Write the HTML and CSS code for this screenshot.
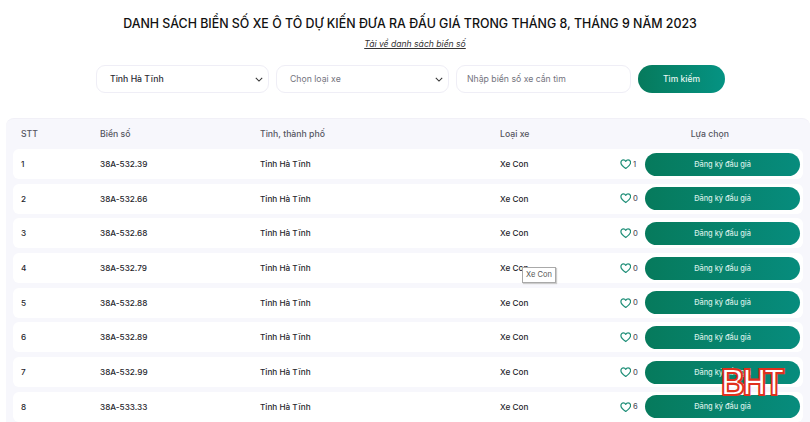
FILE: index.html
```html
<!DOCTYPE html>
<html lang="vi">
<head>
<meta charset="utf-8">
<title>Danh sách biển số</title>
<link rel="stylesheet" href="styles.css">
</head>
<body>
<svg class="defs" width="0" height="0"><symbol id="heart" viewBox="0 0 14 13"><path d="M7 11.8C3.6 9.3 1 7.3 1 4.5 1 2.6 2.4 1.2 4.1 1.2 5.3 1.2 6.4 1.8 7 2.9 7.6 1.8 8.7 1.2 9.9 1.2 11.6 1.2 13 2.6 13 4.5 13 7.3 10.4 9.3 7 11.8Z" fill="none" stroke="currentColor" stroke-width="1.5" stroke-linejoin="round"/></symbol></svg>
<main class="page">
  <h1 class="title">DANH SÁCH BIỂN SỐ XE Ô TÔ DỰ KIẾN ĐƯA RA ĐẤU GIÁ TRONG THÁNG 8, THÁNG 9 NĂM 2023</h1>
  <a class="download">Tải về danh sách biển số</a>
  <form class="filters">
    <div class="field select dark"><span>Tỉnh Hà Tĩnh</span><svg class="chev" viewBox="0 0 10 6"><path d="M1 1l4 4 4-4" fill="none" stroke="currentColor" stroke-width="1.3"/></svg></div>
    <div class="field select"><span>Chọn loại xe</span><svg class="chev" viewBox="0 0 10 6"><path d="M1 1l4 4 4-4" fill="none" stroke="currentColor" stroke-width="1.3"/></svg></div>
    <div class="field search"><span>Nhập biển số xe cần tìm</span></div>
    <div class="submit">Tìm kiếm</div>
  </form>
  <section class="panel">
    <div class="head">
      <span>STT</span><span>Biển số</span><span>Tỉnh, thành phố</span><span>Loại xe</span><span class="choice">Lựa chọn</span>
    </div>
    <div class="row"><span>1</span><span>38A-532.39</span><span>Tỉnh Hà Tĩnh</span><span>Xe Con</span><div class="act"><svg class="heart"><use href="#heart"/></svg><em>1</em><div class="btn">Đăng ký đấu giá</div></div></div>
    <div class="row"><span>2</span><span>38A-532.66</span><span>Tỉnh Hà Tĩnh</span><span>Xe Con</span><div class="act"><svg class="heart"><use href="#heart"/></svg><em>0</em><div class="btn">Đăng ký đấu giá</div></div></div>
    <div class="row"><span>3</span><span>38A-532.68</span><span>Tỉnh Hà Tĩnh</span><span>Xe Con</span><div class="act"><svg class="heart"><use href="#heart"/></svg><em>0</em><div class="btn">Đăng ký đấu giá</div></div></div>
    <div class="row"><span>4</span><span>38A-532.79</span><span>Tỉnh Hà Tĩnh</span><span class="cell-tip">Xe Con<i class="tip">Xe Con</i></span><div class="act"><svg class="heart"><use href="#heart"/></svg><em>0</em><div class="btn">Đăng ký đấu giá</div></div></div>
    <div class="row"><span>5</span><span>38A-532.88</span><span>Tỉnh Hà Tĩnh</span><span>Xe Con</span><div class="act"><svg class="heart"><use href="#heart"/></svg><em>0</em><div class="btn">Đăng ký đấu giá</div></div></div>
    <div class="row"><span>6</span><span>38A-532.89</span><span>Tỉnh Hà Tĩnh</span><span>Xe Con</span><div class="act"><svg class="heart"><use href="#heart"/></svg><em>0</em><div class="btn">Đăng ký đấu giá</div></div></div>
    <div class="row"><span>7</span><span>38A-532.99</span><span>Tỉnh Hà Tĩnh</span><span>Xe Con</span><div class="act"><svg class="heart"><use href="#heart"/></svg><em>0</em><div class="btn">Đăng ký đấu giá</div></div></div>
    <div class="row"><span>8</span><span>38A-533.33</span><span>Tỉnh Hà Tĩnh</span><span>Xe Con</span><div class="act"><svg class="heart"><use href="#heart"/></svg><em>6</em><div class="btn">Đăng ký đấu giá</div></div></div>
  </section>
</main>
<div class="logo">BHT</div>
</body>
</html>
```
FILE: styles.css
```css
* { box-sizing: border-box; }
html, body { margin: 0; height: 422px; overflow: hidden; background: #fff; }
body { font-family: Inter, "Liberation Sans", sans-serif; color: #1c1c22; position: relative; }
.defs { position: absolute; }
.page { display: flex; flex-direction: column; align-items: center; padding-top: 15px; }
.title { margin: 0 0 0 10px; font-size: 12.4px; line-height: 18px; font-weight: 500; color: #111; white-space: nowrap; }
.download { margin: 4px 0 0 20px; font-size: 8.6px; line-height: 14px; font-style: italic; text-decoration: underline; color: #333; }
.filters { display: flex; align-items: center; gap: 7px; margin-top: 14px; width: 810px; padding-left: 96px; }
.field { height: 28px; border: 1.5px solid #efeef6; border-radius: 9px; display: flex; align-items: center; justify-content: space-between; font-size: 8.7px; color: #73737d; background: #fff; }
.select { width: 173px; padding: 0 5px 0 13px; }
.select.dark { color: #2b2b33; font-weight: 500; }
.search { width: 175px; padding: 0 10px; }
.chev { width: 8px; height: 5px; color: #333; }
.submit { width: 87px; height: 28px; border-radius: 14px; display: flex; align-items: center; justify-content: center; font-size: 8.5px; font-weight: 500; color: #e9f7f2; background: linear-gradient(90deg, #067a5c, #059383); }
.panel { align-self: stretch; margin: 25px 0 0 6px; padding: 0 7px; background: #f7f7fc; border-radius: 8px 8px 0 0; border-top: 1px solid #f1f0f7; display: flex; flex-direction: column; gap: 4.7px; }
.head, .row { display: grid; grid-template-columns: 79px 160px 240px 116px 1fr; align-items: center; padding: 0 3px 0 8px; font-size: 8.2px; }
.head { height: 30px; margin-bottom: -4.7px; color: #55555f; font-weight: 500; font-size: 8.7px; }
.row { height: 30px; background: #fff; border-radius: 6px; color: #26262c; font-weight: 500; }
.choice { justify-self: end; margin-right: 71px; }
.act { display: flex; align-items: center; justify-content: flex-end; height: 100%; }
.heart { width: 11.5px; height: 10.5px; color: #1f8f78; }
.act em { font-style: normal; font-size: 7.5px; color: #55555f; margin: 0 7px 0 2px; width: 5px; }
.btn { width: 155px; height: 23px; border-radius: 12px; display: flex; align-items: center; justify-content: center; font-size: 7.4px; color: #d5eee6; background: linear-gradient(90deg, #067a5c, #078c7d); }
.cell-tip { position: relative; }
.tip { position: absolute; left: 22px; top: 4px; width: 34px; height: 16px; border: 1px solid #a9a9a9; background: #fff; font-style: normal; font-weight: 400; font-size: 7.5px; line-height: 14px; text-align: center; color: #555; box-shadow: 1px 1px 1px #ccc; }
.logo { position: absolute; left: 721px; top: 365px; font-family: "Liberation Sans", sans-serif; font-size: 37px; line-height: 36px; font-weight: 700; letter-spacing: -2.5px; color: #fff; -webkit-text-stroke: 2.2px #e0301e; transform: scaleX(0.89); transform-origin: left center; }
```
